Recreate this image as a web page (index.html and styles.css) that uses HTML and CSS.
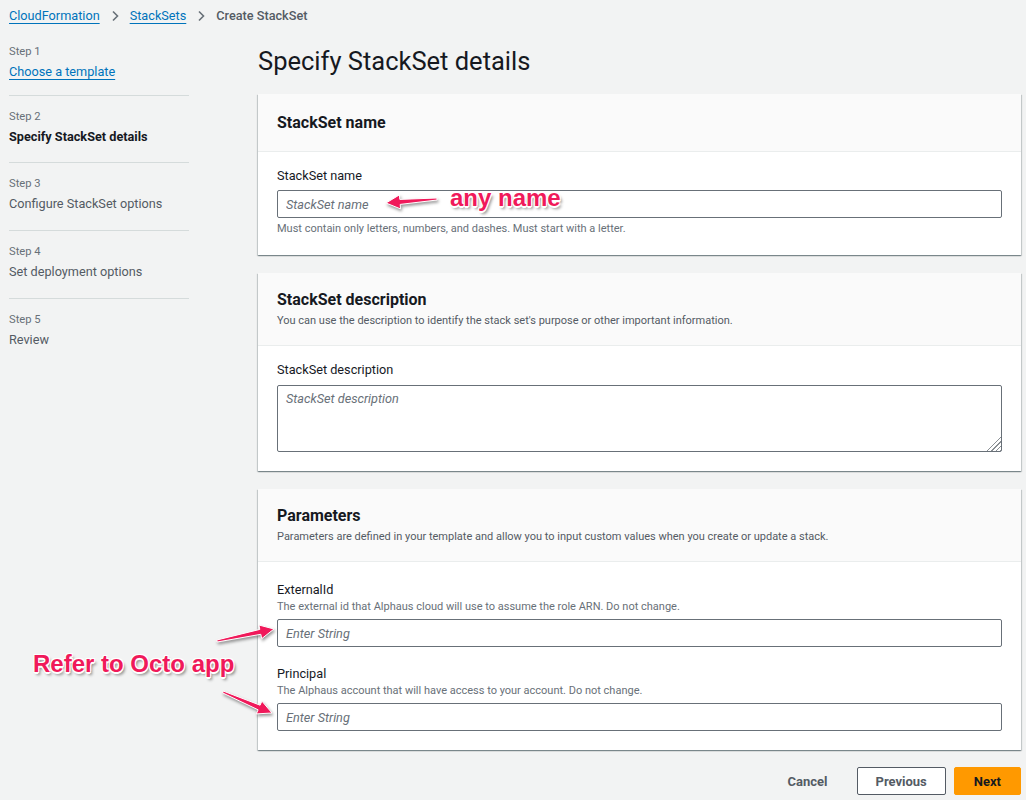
FILE: index.html
```html
<!DOCTYPE html>
<html lang="en">
<head>
<meta charset="utf-8">
<title>Create StackSet</title>
<link rel="stylesheet" href="styles.css">
</head>
<body>
<div class="page">
  <nav class="breadcrumbs">
    <a class="crumb-link" href="#">CloudFormation</a>
    <span class="chev"><svg width="9" height="12" viewBox="0 0 9 12"><path d="M2 1.5 L6.5 6 L2 10.5" fill="none" stroke="#687078" stroke-width="1.6"/></svg></span>
    <a class="crumb-link" href="#">StackSets</a>
    <span class="chev"><svg width="9" height="12" viewBox="0 0 9 12"><path d="M2 1.5 L6.5 6 L2 10.5" fill="none" stroke="#687078" stroke-width="1.6"/></svg></span>
    <span class="crumb-current">Create StackSet</span>
  </nav>

  <div class="layout">
    <aside class="steps">
      <div class="step">
        <div class="step-num">Step 1</div>
        <a class="step-link" href="#">Choose a template</a>
      </div>
      <div class="step">
        <div class="step-num">Step 2</div>
        <div class="step-title current">Specify StackSet details</div>
      </div>
      <div class="step">
        <div class="step-num">Step 3</div>
        <div class="step-title">Configure StackSet options</div>
      </div>
      <div class="step">
        <div class="step-num">Step 4</div>
        <div class="step-title">Set deployment options</div>
      </div>
      <div class="step">
        <div class="step-num">Step 5</div>
        <div class="step-title">Review</div>
      </div>
    </aside>

    <main class="main">
      <h1 class="page-title">Specify StackSet details</h1>

      <section class="panel">
        <header class="panel-hd panel-hd-single">
          <h2 class="panel-title">StackSet name</h2>
        </header>
        <div class="panel-bd panel-bd-a">
          <label class="field-label">StackSet name</label>
          <input class="text-input" type="text" placeholder="StackSet name">
          <div class="hint">Must contain only letters, numbers, and dashes. Must start with a letter.</div>
        </div>
      </section>

      <section class="panel">
        <header class="panel-hd">
          <h2 class="panel-title">StackSet description</h2>
          <p class="panel-desc">You can use the description to identify the stack set's purpose or other important information.</p>
        </header>
        <div class="panel-bd panel-bd-b">
          <label class="field-label">StackSet description</label>
          <textarea class="text-area" placeholder="StackSet description"></textarea>
        </div>
      </section>

      <section class="panel">
        <header class="panel-hd">
          <h2 class="panel-title">Parameters</h2>
          <p class="panel-desc">Parameters are defined in your template and allow you to input custom values when you create or update a stack.</p>
        </header>
        <div class="panel-bd panel-bd-c">
          <div class="field">
            <label class="field-label">ExternalId</label>
            <div class="field-desc">The external id that Alphaus cloud will use to assume the role ARN. Do not change.</div>
            <input class="text-input" type="text" placeholder="Enter String">
          </div>
          <div class="field">
            <label class="field-label">Principal</label>
            <div class="field-desc">The Alphaus account that will have access to your account. Do not change.</div>
            <input class="text-input" type="text" placeholder="Enter String">
          </div>
        </div>
      </section>

      <div class="actions">
        <button class="btn btn-link">Cancel</button>
        <button class="btn btn-normal">Previous</button>
        <button class="btn btn-primary">Next</button>
      </div>
    </main>
  </div>

  <div class="note note-name">any name</div>
  <div class="note note-octo">Refer to Octo app</div>
  <svg class="arrows" width="1026" height="800" viewBox="0 0 1026 800">
    <g class="arrow-shapes">
      <polygon points="436.9,198 399.8,199.4 399.4,194.9 386,203 400.5,208.9 400.2,204.4 437.1,200"/>
      <polygon points="217.2,642 260.8,634.3 261.7,638.7 274,629 258.9,625 259.8,629.4 216.8,640"/>
      <polygon points="222.6,692.9 258.1,709.8 256.3,713.9 272,713 261.9,701.1 260.1,705.2 223.4,691.1"/>
    </g>
  </svg>
</div>
</body>
</html>
```

FILE: styles.css
```css
* { box-sizing: border-box; }
html, body { margin: 0; padding: 0; }
body {
  background: #f2f3f3;
  font-family: Roboto, "Noto Sans", Arial, sans-serif;
  color: #16191f;
  font-size: 12.7px;
}
.page {
  position: relative;
  width: 1026px;
  height: 800px;
  overflow: hidden;
  padding: 6px 5px 0 9px;
}
.breadcrumbs {
  display: flex;
  align-items: center;
  height: 20px;
  font-size: 12.7px;
  line-height: 20px;
}
.crumb-link { color: #0073bb; text-decoration: underline; text-underline-offset: 3px; }
.chev { display: inline-flex; margin: 0 10px 0 11px; }
.crumb-current { color: #545b64; font-weight: 500; }

.layout {
  display: grid;
  grid-template-columns: 180px 1fr;
  column-gap: 69px;
}
.steps { margin-top: 5px; }
.step {
  padding: 13px 0 15px;
  border-top: 1px solid #d5dbdb;
}
.step:first-child { border-top: none; padding-top: 13px; padding-bottom: 13px; }
.step + .step + .step { padding-bottom: 16px; }
.step-num {
  font-size: 11.2px;
  line-height: 16px;
  color: #687078;
  margin-bottom: 2px;
}
.step-link, .step-title {
  display: block;
  font-size: 12.7px;
  line-height: 20px;
}
.step-link { color: #0073bb; text-decoration: underline; text-underline-offset: 3px; }
.step-title { color: #545b64; }
.step-title.current { color: #16191f; font-weight: 700; }

.main { padding-top: 19px; }
.page-title {
  margin: 0 0 17px;
  font-size: 25.5px;
  line-height: 32px;
  font-weight: 400;
  color: #16191f;
}
.panel {
  background: #fff;
  box-shadow: 0 1px 1px 0 rgba(0,28,36,.3), 1px 1px 1px 0 rgba(0,28,36,.15), -1px 1px 1px 0 rgba(0,28,36,.15);
  margin-bottom: 18px;
}
.panel-hd {
  background: #fafafa;
  border-bottom: 1px solid #eaeded;
  padding: 17px 19px 16px;
}
.panel-hd-single { padding: 19px 19px 18px; }
.panel-title {
  margin: 0;
  font-size: 16px;
  line-height: 20px;
  font-weight: 700;
}
.panel-desc {
  margin: 3px 0 0;
  font-size: 11px;
  line-height: 16px;
  color: #545b64;
}
.panel-bd { padding: 0 19px; }
.panel-bd-a { padding-top: 15px; padding-bottom: 18px; }
.panel-bd-b { padding-top: 14px; padding-bottom: 19px; }
.panel-bd-b .field-label { line-height: 20px; }
.panel-bd-c { padding-top: 19px; padding-bottom: 19px; }
.field + .field { margin-top: 18px; }
.field-label {
  display: block;
  font-size: 12.7px;
  line-height: 18px;
  color: #16191f;
  margin-bottom: 5px;
}
.field .field-label { margin-bottom: 0; }
.field-desc {
  font-size: 11px;
  line-height: 16px;
  color: #687078;
  margin-bottom: 4px;
}
.text-input, .text-area {
  display: block;
  width: 100%;
  border: 1px solid #687078;
  border-radius: 2px;
  background: #fff;
  font-family: inherit;
  font-size: 12.7px;
  color: #16191f;
  padding: 4px 8px;
}
.text-input { height: 28px; }
.text-area { height: 67px; resize: vertical; padding-top: 4px; line-height: 18px; }
.text-area::-webkit-resizer {
  background:
    linear-gradient(to bottom right, #fff 50%, transparent 50%),
    repeating-linear-gradient(135deg, #fff 0 2px, #8a8f94 2px 3px);
}
.text-input::placeholder, .text-area::placeholder { color: #687078; font-style: italic; opacity: 1; }
.hint {
  margin-top: 3px;
  font-size: 11px;
  line-height: 16px;
  color: #687078;
}
.actions {
  display: flex;
  justify-content: flex-end;
  gap: 8px;
  margin-top: -1px;
}
.btn {
  height: 28px;
  font-family: inherit;
  font-size: 13px;
  font-weight: 700;
  border-radius: 2px;
  padding: 0 19px;
  cursor: pointer;
}
.btn-link { background: transparent; border: 1px solid transparent; color: #545b64; padding: 0 20px; }
.btn-normal { background: #fff; border: 1px solid #545b64; color: #545b64; padding: 0 18px; }
.btn-primary { background: #ff9900; border: 1px solid #ff9900; color: #16191f; }

.note {
  position: absolute;
  font-family: "Liberation Sans", Arial, sans-serif;
  font-weight: 700;
  font-size: 24px;
  line-height: 28px;
  color: #f0195a;
  text-shadow: -1px -1px 0 #fff, 1px -1px 0 #fff, -1px 1px 0 #fff, 1px 1px 0 #fff, 0 -1.5px 0 #fff, 0 1.5px 0 #fff, 2px 3px 3px rgba(0,0,0,.45);
  white-space: nowrap;
}
.note-name { left: 450px; top: 184px; }
.note-octo { left: 33px; top: 650px; }
.arrows { position: absolute; left: 0; top: 0; pointer-events: none; }
.arrow-shapes {
  fill: #f0195a;
  stroke: #fff;
  stroke-width: 1;
  filter: drop-shadow(1.5px 2px 1.5px rgba(0,0,0,.4));
}
```
